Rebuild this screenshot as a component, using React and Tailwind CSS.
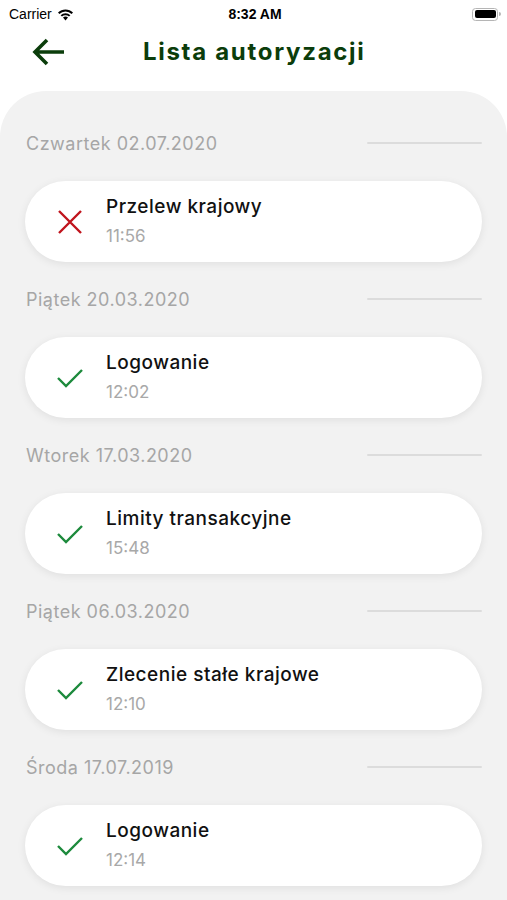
import React from 'react'

const items = [
  { date: 'Czwartek 02.07.2020', title: 'Przelew krajowy', time: '11:56', ok: false },
  { date: 'Piątek 20.03.2020', title: 'Logowanie', time: '12:02', ok: true },
  { date: 'Wtorek 17.03.2020', title: 'Limity transakcyjne', time: '15:48', ok: true },
  { date: 'Piątek 06.03.2020', title: 'Zlecenie stałe krajowe', time: '12:10', ok: true },
  { date: 'Środa 17.07.2019', title: 'Logowanie', time: '12:14', ok: true },
]

const StatusBar = () => (
  <div className="h-7 flex items-center justify-between pl-[9px] pr-[6px] text-[14px] text-black font-['Liberation_Sans',sans-serif]">
    <div className="flex items-center gap-[5px] w-[120px]">
      <span>Carrier</span>
      <svg width="17" height="13" viewBox="0 0 17 13">
        <path d="M8.5 12.5 L6 9.6 A3.6 3.6 0 0 1 11 9.6 Z" fill="#000" />
        <path d="M3.6 7.2 A7 7 0 0 1 13.4 7.2 L12 8.6 A5 5 0 0 0 5 8.6 Z" fill="#000" />
        <path d="M1 4.6 A10.6 10.6 0 0 1 16 4.6 L14.6 6 A8.6 8.6 0 0 0 2.4 6 Z" fill="#000" />
      </svg>
    </div>
    <span className="font-semibold">8:32 AM</span>
    <div className="w-[120px] flex justify-end">
      <div className="flex items-center">
        <div className="w-[26px] h-[13px] rounded-[3.5px] border border-[#b5b5b5] p-[1.5px]">
          <div className="w-full h-full rounded-[2px] bg-black" />
        </div>
        <div className="w-[1.5px] h-[4px] bg-[#b5b5b5] rounded-r-sm ml-[1px]" />
      </div>
    </div>
  </div>
)

const StatusIcon = ({ ok }) =>
  ok ? (
    <svg width="28" height="22" viewBox="0 0 28 22">
      <path d="M2 11 L10 19 L26 3" fill="none" stroke="#1c8a3c" strokeWidth="2.4" />
    </svg>
  ) : (
    <svg width="26" height="26" viewBox="0 0 26 26">
      <path d="M2 2 L24 24 M24 2 L2 24" fill="none" stroke="#c0141c" strokeWidth="2.4" />
    </svg>
  )

export default function App() {
  return (
    <div className="w-[507px] h-[900px] bg-white overflow-hidden flex flex-col font-['Inter',sans-serif]">
      <StatusBar />
      <div className="h-[48px] mb-[15px] flex items-center pl-[32px]">
        <svg width="34" height="30" viewBox="0 0 34 30">
          <path d="M32 15 H4 M15 3 L3 15 L15 27" fill="none" stroke="#0b3d0b" strokeWidth="3.6" />
        </svg>
        <h1 className="ml-[77px] text-[24px] font-bold text-[#0b3d0b] tracking-[1.7px]">Lista autoryzacji</h1>
      </div>
      <div className="flex-1 bg-[#f2f2f2] rounded-t-[46px] px-[25px] pt-[40px] flex flex-col gap-[25px]">
        {items.map((it, i) => (
          <div key={i} className="flex flex-col gap-[26px]">
            <div className="h-6 flex items-center justify-between">
              <span className="text-[18px] text-[#a6a6a6] pl-px tracking-[0.5px]">{it.date}</span>
              <div className="w-[115px] h-[2px] bg-[#dcdcdc] rounded-full" />
            </div>
            <div className="h-[81px] bg-white rounded-full shadow-[0_2px_8px_rgba(0,0,0,0.08)] flex items-center">
              <div className="w-[81px] flex justify-center pl-[8px]">
                <StatusIcon ok={it.ok} />
              </div>
              <div className="flex flex-col">
                <span className="text-[19px] font-medium text-[#111] leading-[24px] tracking-[0.5px]">{it.title}</span>
                <span className="text-[17px] text-[#a8a8a8] leading-[24px] mt-[5px]">{it.time}</span>
              </div>
            </div>
          </div>
        ))}
      </div>
    </div>
  )
}
